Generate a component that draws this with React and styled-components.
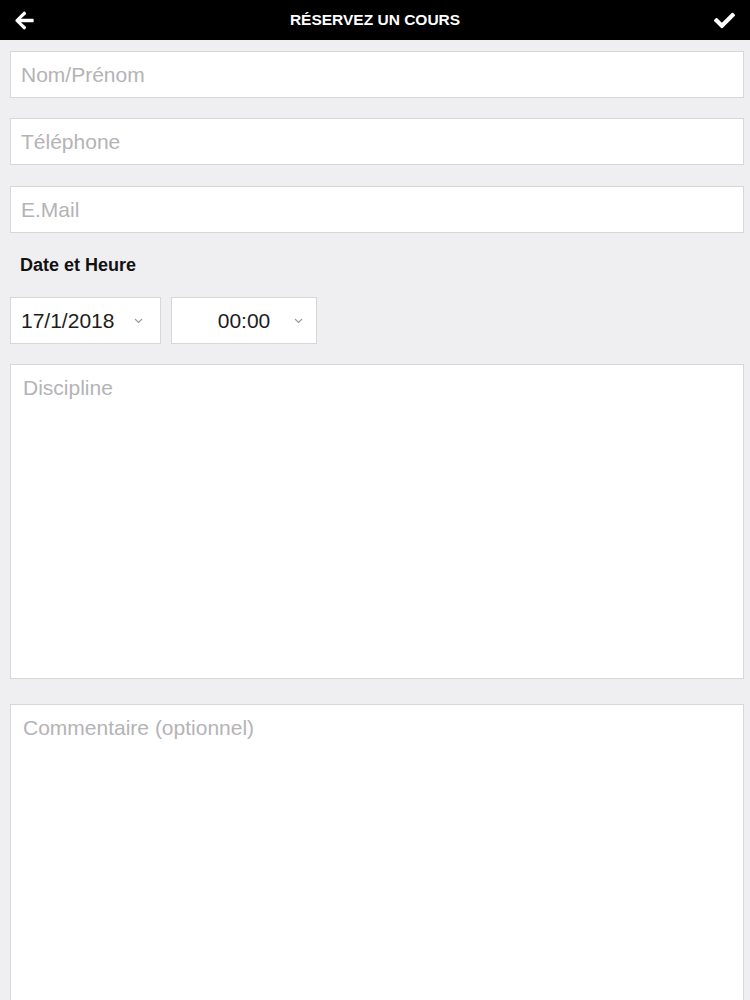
import styled, { createGlobalStyle } from "styled-components";
import { FaArrowLeft, FaCheck } from "react-icons/fa";

const GlobalStyle = createGlobalStyle`
  html, body {
    margin: 0;
    padding: 0;
    background: #efeef0;
    font-family: "Liberation Sans", Arial, sans-serif;
  }
`;

const Container = styled.div`
  width: 750px;
  min-height: 1000px;
  background: #efeef0;
  overflow: hidden;
`;

const Header = styled.header`
  height: 40px;
  background: #000;
  color: #fff;
  display: flex;
  align-items: center;
  justify-content: space-between;
  padding: 0 14px;
  box-sizing: border-box;
`;

const Title = styled.h1`
  margin: 0;
  font-size: 15.5px;
  font-weight: 700;
`;

const IconButton = styled.button`
  background: none;
  border: none;
  padding: 0;
  color: #fff;
  display: flex;
  align-items: center;
  width: 22px;
  height: 22px;
  font-size: 21px;
  cursor: pointer;
`;

const Form = styled.form`
  display: flex;
  flex-direction: column;
  padding: 11px 6px 0 10px;
`;

const Input = styled.input`
  height: 47px;
  box-sizing: border-box;
  border: 1px solid #d7d6d8;
  background: #fff;
  padding: 0 10px;
  margin-bottom: ${(p) => p.$mb || 20}px;
  font-family: inherit;
  font-size: 21px;
  color: #222;
  outline: none;
  &::placeholder {
    color: #b4b3b6;
  }
`;

const Label = styled.div`
  font-size: 18px;
  font-weight: 700;
  color: #111;
  padding: 0 10px;
  margin: 2px 0 21px;
`;

const SelectRow = styled.div`
  display: flex;
  gap: 10px;
  margin-bottom: 20px;
`;

const Select = styled.div`
  width: ${(p) => p.$w}px;
  height: 47px;
  box-sizing: border-box;
  border: 1px solid #d7d6d8;
  background: #fff;
  display: flex;
  align-items: center;
  justify-content: ${(p) => (p.$center ? "center" : "flex-start")};
  padding: 0 10px;
  position: relative;
  font-size: 21px;
  color: #1d1d1d;
`;

const Chevron = styled.svg`
  position: absolute;
  right: ${(p) => p.$r}px;
  top: 20px;
  width: 9px;
  height: 6px;
`;

const TextArea = styled.textarea`
  height: ${(p) => p.$h}px;
  box-sizing: border-box;
  border: 1px solid #d7d6d8;
  background: #fff;
  padding: 11px 12px;
  margin-bottom: ${(p) => p.$mb || 0}px;
  font-family: inherit;
  font-size: 21px;
  color: #222;
  resize: none;
  outline: none;
  &::placeholder {
    color: #b4b3b6;
  }
`;

const Arrow = ({ r }) => (
  <Chevron $r={r} viewBox="0 0 9 6">
    <path d="M1 1 L4.5 4.5 L8 1" fill="none" stroke="#9a999c" strokeWidth="1.2" />
  </Chevron>
);

const App = () => {
  return (
    <Container>
      <GlobalStyle />
      <Header>
        <IconButton aria-label="retour">
          <FaArrowLeft />
        </IconButton>
        <Title>RÉSERVEZ UN COURS</Title>
        <IconButton aria-label="valider">
          <FaCheck />
        </IconButton>
      </Header>
      <Form onSubmit={(e) => e.preventDefault()}>
        <Input placeholder="Nom/Prénom" />
        <Input placeholder="Téléphone" $mb={21} />
        <Input placeholder="E.Mail" $mb={20} />
        <Label>Date et Heure</Label>
        <SelectRow>
          <Select $w={151}>
            17/1/2018
            <Arrow r={17} />
          </Select>
          <Select $w={146} $center>
            00:00
            <Arrow r={13} />
          </Select>
        </SelectRow>
        <TextArea placeholder="Discipline" $h={315} $mb={25} />
        <TextArea placeholder="Commentaire (optionnel)" $h={330} />
      </Form>
    </Container>
  );
};

export default App;
